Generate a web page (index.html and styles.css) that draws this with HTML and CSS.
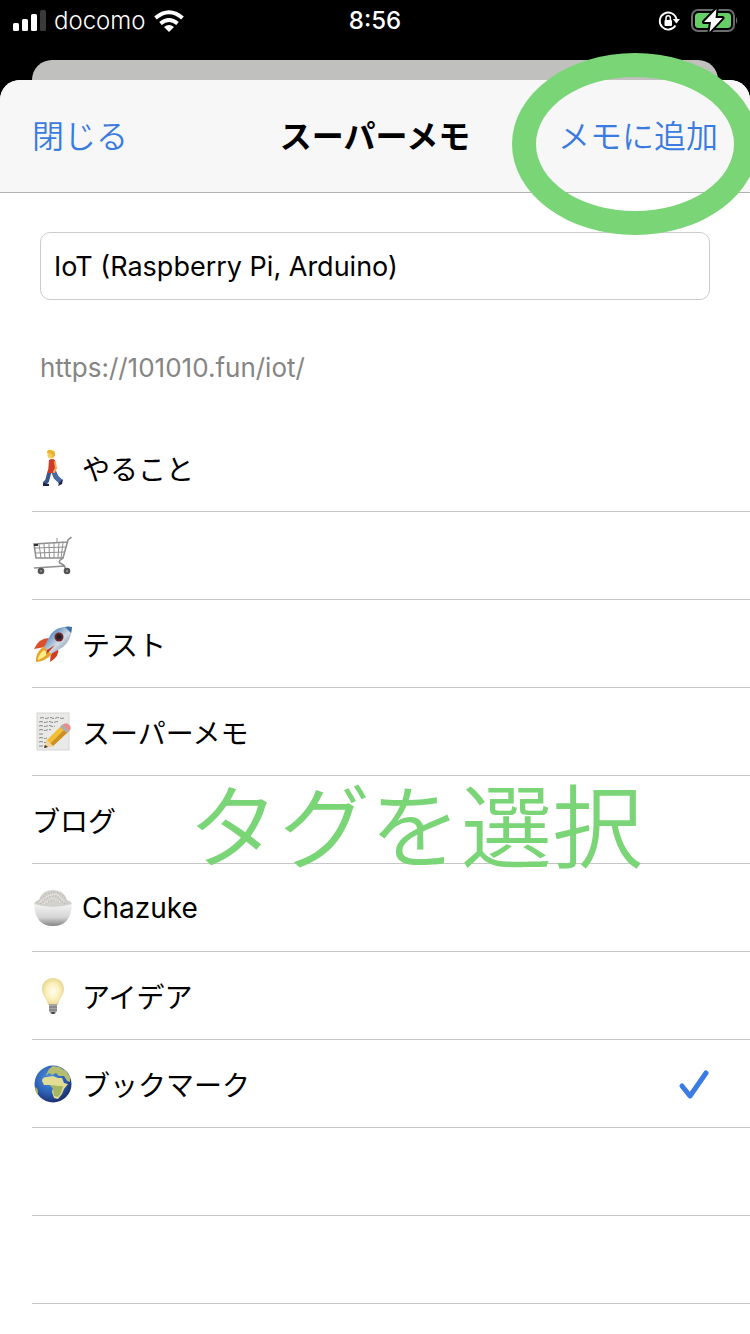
FILE: index.html
```html
<!DOCTYPE html>
<html lang="ja">
<head>
    <meta charset="UTF-8">
    <meta name="viewport" content="width=device-width, initial-scale=1.0">
    <title>スーパーメモ</title>
    <link rel="stylesheet" href="styles.css">
</head>
<body>
    <div class="status-bar">
        <div class="status-left">
            <svg class="signal" width="34" height="22" viewBox="0 0 34 22">
                <rect x="1" y="13" width="6" height="8" rx="1.5" fill="#fff"/>
                <rect x="10" y="9" width="6" height="12" rx="1.5" fill="#fff"/>
                <rect x="19" y="4" width="6" height="17" rx="1.5" fill="#fff"/>
                <rect x="28" y="0" width="6" height="21" rx="1.5" fill="#3a3a3a"/>
            </svg>
            <span>docomo</span>
            <svg class="wifi" width="30" height="22" viewBox="0 0 30 22">
                <g fill="none" stroke="#fff" stroke-width="4">
                    <path d="M1.500 8 Q15 -3.500 28.500 8"/>
                    <path d="M6.500 13.500 Q15 6.500 23.500 13.500"/>
                </g>
                <path d="M10 17 Q15 13 20 17 L15 22 Z" fill="#fff"/>
            </svg>
        </div>
        <div class="clock">8:56</div>
        <div class="status-right">
            <svg width="22" height="22" viewBox="0 0 22 22">
                <path d="M17.500 15.500 A8.500 8.500 0 1 1 18.500 9" fill="none" stroke="#fff" stroke-width="1.800"/>
                <path d="M14.800 9 H22 L18.400 13.500 Z" fill="#fff"/>
                <rect x="6.500" y="10" width="7.500" height="6" rx="1" fill="#fff"/>
                <path d="M8 10 V8 a2.200 2.200 0 0 1 4.400 0 V10" fill="none" stroke="#fff" stroke-width="1.500"/>
            </svg>
            <svg width="48" height="26" viewBox="0 0 48 26">
                <rect x="2" y="2" width="42" height="21" rx="6" fill="none" stroke="#6b6b6b" stroke-width="2"/>
                <rect x="5" y="5" width="36" height="15" rx="3.500" fill="#66ce67"/>
                <path d="M46 9 q2.500 3.500 0 7 Z" fill="#6b6b6b"/>
                <path d="M26.500 1 L14 14 H21 L19.500 24 L32.500 10 H25.500 Z" fill="#fff" stroke="#000" stroke-width="4" stroke-linejoin="round" paint-order="stroke"/>
            </svg>
        </div>
    </div>

    <div class="back-card"></div>

    <main class="sheet">
        <header class="nav">
            <button type="button" class="nav-btn">閉じる</button>
            <h1>スーパーメモ</h1>
            <button type="button" class="nav-btn add">メモに追加</button>
        </header>
        <div class="ring"></div>

        <form class="memo-form">
            <input type="text" class="memo-title" aria-label="タイトル" value="IoT (Raspberry Pi, Arduino)">
            <p class="memo-url">https://101010.fun/iot/</p>
        </form>

        <ul class="tags">
            <li>
                <label>
                    <svg class="icon" viewBox="0 0 40 40">
                        <path d="M18 22 L15 33 L12 36" fill="none" stroke="#3b568c" stroke-width="4"/>
                        <path d="M21 22 L24 29 L29 34" fill="none" stroke="#4a68a3" stroke-width="5"/>
                        <path d="M11 35 L17 36 V38 H11 Z M27 35 L31 31 L30 36 L26 38 Z" fill="#1c2547"/>
                        <path d="M17 12 Q20 10 23 12 L24 18 L22 25 H16 Z" fill="#cf3a2b"/>
                        <path d="M23 14 L24 20 L22 24" fill="none" stroke="#f2b04a" stroke-width="2" stroke-linecap="round"/>
                        <circle cx="19" cy="7" r="3.600" fill="#f7c95f"/>
                        <path d="M15 5 Q15 1 19 2 Q24 2 23 8 L20 9 Q21 5 15 5Z" fill="#e9b52f"/>
                    </svg>
                    <span>やること</span>
                    <input type="checkbox" name="tag">
                </label>
            </li>
            <li>
                <label>
                    <svg class="icon" viewBox="0 0 40 40">
                        <g fill="none" stroke="#909090">
                            <path d="M39.500 1 L36 4 L31 22 H4 L2 8 L35 6" stroke-width="1.600"/>
                            <path d="M3 12 L34 11 M3.500 17 L33 16 M7 8 L9 22 M12 8 L13 22 M17 8 L17.500 22 M22 7 V22 M27 7 L26 22 M31 7 L29 22 M25 2 V7" stroke-width="1"/>
                            <path d="M31 22 Q24 26 30 28 Q34 30 33 34 M2 32 L33 30 M9 32 V34" stroke-width="1.500"/>
                        </g>
                        <rect x="2" y="8" width="4" height="2" fill="#333"/>
                        <circle cx="9" cy="35" r="3.300" fill="#555"/>
                        <circle cx="35" cy="35" r="3.300" fill="#555"/>
                        <circle cx="9" cy="35" r="1" fill="#999"/>
                        <circle cx="35" cy="35" r="1" fill="#999"/>
                    </svg>
                    <input type="checkbox" name="tag" aria-label="買い物">
                </label>
            </li>
            <li>
                <label>
                    <svg class="icon" viewBox="0 0 40 40">
                        <defs>
                            <linearGradient id="hull" x1="0" y1="0" x2="1" y2="1">
                                <stop offset="0.200" stop-color="#4c83bd"/>
                                <stop offset="0.550" stop-color="#d3dce4"/>
                                <stop offset="0.850" stop-color="#7690aa"/>
                            </linearGradient>
                        </defs>
                        <path d="M17 14 Q7 14 2 25 L13 23 Z" fill="#dc4f2a"/>
                        <path d="M26 24 Q28 32 18 38 L19 28 Z" fill="#d23c22"/>
                        <path d="M12 22 Q3 29 4 38 Q14 37 20 30 Z" fill="#e9a32b"/>
                        <path d="M12 26 Q6 31 6 36 Q12 34 16 29 Z" fill="#fff08a"/>
                        <path d="M40 3 Q26 1 19 10 L12 23 L19 30 L31 23 Q40 15 40 3 Z" fill="url(#hull)"/>
                        <path d="M40 3 Q36 2 33 3 L39 9 Q40 6 40 3Z" fill="#3f72ad"/>
                        <circle cx="27" cy="13" r="4.500" fill="#742627"/>
                        <circle cx="27" cy="13" r="2.700" fill="#23202a"/>
                        <path d="M23 21 L14 31 L15 26 Z" fill="#c63a27"/>
                    </svg>
                    <span>テスト</span>
                    <input type="checkbox" name="tag">
                </label>
            </li>
            <li>
                <label>
                    <svg class="icon" viewBox="0 0 40 40">
                        <rect x="5" y="1" width="32" height="37" fill="#e9e9e7" stroke="#d5d5d2"/>
                        <path d="M8 6 q2 -1 4 0 t4 0 t4 0 t4 0 t4 0 t4 0 M7 10 q2 -1 4 0 t4 0 t4 0 t4 0 t4 0 M7 14 q2 -1 4 0 t4 0 t4 0 t4 0 M7 18 q2 -1 4 0 t4 0 t4 0 M7 22 h5 M7 26 q2 -1 4 0 t4 0 M7 30 q2 -1 4 0 t4 0 M7 34 h6" fill="none" stroke="#888" stroke-width="1" stroke-dasharray="4 1"/>
                        <path d="M12 36 L15 28 L30 13 L37 19 L21 34 Z" fill="#f0bf35"/>
                        <path d="M18 32 L34 16 L37 19 L21 34 Z" fill="#cf8e22"/>
                        <path d="M12 36 L15 28 L21 34 Z" fill="#f0d5a0"/>
                        <path d="M12 36 L13 33 L16 35 Z" fill="#333"/>
                        <path d="M28 15 L31 12 L38 18 L35 21 Z" fill="#a9adb2"/>
                        <path d="M31 13 Q33 10 36 12 Q41 15 37 19 Z" fill="#e58f8c"/>
                    </svg>
                    <span>スーパーメモ</span>
                    <input type="checkbox" name="tag">
                </label>
            </li>
            <li class="annotated">
                <label>
                    <span>ブログ</span>
                    <input type="checkbox" name="tag">
                </label>
                <div class="note">タグを選択</div>
            </li>
            <li>
                <label>
                    <svg class="icon" viewBox="0 0 40 40">
                        <defs>
                            <linearGradient id="bowl" x1="0" y1="0" x2="0" y2="1">
                                <stop offset="0" stop-color="#f4f4f4"/>
                                <stop offset="0.600" stop-color="#d5d5d5"/>
                                <stop offset="1" stop-color="#858585"/>
                            </linearGradient>
                        </defs>
                        <path d="M2 16 H40 Q39 38 21 38 Q3 38 2 16 Z" fill="url(#bowl)"/>
                        <path d="M2 16 Q4 12 7 12 Q10 2 21 2 Q32 2 35 12 Q39 13 40 16 Q21 22 2 16Z" fill="#d3d1cb"/>
                        <path d="M5 15 L9 11 L14 6 L20 4 L26 5 L31 8 L36 15 M8 16 L13 11 L19 8 L25 8 L33 16 M14 16 L18 12 L24 12 L29 16" fill="none" stroke="#bbb8b1" stroke-width="1.500" stroke-dasharray="1 2"/>
                        <path d="M8 14 L16 8 L24 6 L32 13 M12 16 L20 10 L28 14" fill="none" stroke="#eceae5" stroke-width="1.500" stroke-dasharray="1 1"/>
                    </svg>
                    <span>Chazuke</span>
                    <input type="checkbox" name="tag">
                </label>
            </li>
            <li>
                <label>
                    <svg class="icon" viewBox="0 0 40 40">
                        <defs>
                            <radialGradient id="glow">
                                <stop offset="0" stop-color="#fffef0"/>
                                <stop offset="0.600" stop-color="#fbf0bd"/>
                                <stop offset="1" stop-color="#ead793"/>
                            </radialGradient>
                        </defs>
                        <path d="M21 2 C14 2 10 7 10 13 C10 20 15 22 16 29 H26 C27 22 32 20 32 13 C32 7 28 2 21 2 Z" fill="url(#glow)"/>
                        <path d="M17 28 H25 V35 L23 38 H19 L17 35 Z" fill="#a5a5a5"/>
                        <path d="M17 31 H25 M17 34 H25" stroke="#707070" stroke-width="1"/>
                        <path d="M19 36 H23 L22 38 H20 Z" fill="#444"/>
                    </svg>
                    <span>アイデア</span>
                    <input type="checkbox" name="tag">
                </label>
            </li>
            <li>
                <label>
                    <svg class="icon" viewBox="0 0 40 40">
                        <defs>
                            <radialGradient id="sea" cx="0.400" cy="0.350" r="0.650">
                                <stop offset="0" stop-color="#4d93dc"/>
                                <stop offset="0.600" stop-color="#2d60b5"/>
                                <stop offset="1" stop-color="#1b3274"/>
                            </radialGradient>
                        </defs>
                        <circle cx="21" cy="20" r="18.500" fill="url(#sea)"/>
                        <path d="M10 17 Q10 13 15 13 L21 12 L26 14 L30 14 L32 19 L36 20 L32 25 L30 30 L26 35 L22 34 L20 28 L21 24 L18 21 L12 21 Z" fill="#e2dc95"/>
                        <path d="M19 21 L27 22 L31 22 L29 29 L26 33 L22 32 L21 25 Z" fill="#a5b560"/>
                        <path d="M15 9 L17 5 L21 2 L27 3 L34 7 L38 13 L38 18 L35 17 L32 12 L27 12 L24 9 L20 11 L17 9 L14 12 Z" fill="#b4bd70"/>
                        <path d="M3 23 Q6 24 6 28 L6 31 Q3 28 3 23 Z" fill="#a9b45e"/>
                    </svg>
                    <span>ブックマーク</span>
                    <input type="checkbox" name="tag" checked>
                    <svg class="check" width="32" height="32" viewBox="0 0 32 32">
                        <path d="M4 18 L12 28 L28 5" fill="none" stroke="#3a7be6" stroke-width="5" stroke-linecap="round" stroke-linejoin="round"/>
                    </svg>
                </label>
            </li>
            <li></li>
            <li></li>
        </ul>
    </main>
</body>
</html>
```
FILE: styles.css
```css
* {
    box-sizing: border-box;
}
body {
    margin: 0;
    background-color: #000;
    color: #000;
    font-family: Inter, "Noto Sans CJK JP", sans-serif;
    font-size: 28px;
    min-height: 100vh;
    display: flex;
    flex-direction: column;
    overflow-x: clip;
}
.status-bar {
    display: grid;
    grid-template-columns: 1fr auto 1fr;
    align-items: center;
    height: 41px;
    margin-bottom: 19px;
    padding: 0 12px;
    color: #fff;
    font-size: 24px;
    line-height: 42px;
}
.status-left,
.status-right {
    display: flex;
    align-items: center;
    gap: 8px;
}
.status-left {
    font-weight: 350;
}
.status-right {
    justify-content: flex-end;
    gap: 10px;
}
.clock {
    font-weight: 500;
}
.back-card {
    height: 20px;
    margin: 0 32px;
    border-radius: 20px 20px 0 0;
    background-color: #c0c1be;
}
.sheet {
    position: relative;
    flex: 1;
    background-color: #fff;
    border-radius: 20px 20px 0 0;
}
.nav {
    display: grid;
    grid-template-columns: 1fr auto 1fr;
    align-items: center;
    height: 113px;
    padding: 0 32px 4px;
    background-color: #f7f7f7;
    border-bottom: 1px solid #b2b2b2;
    border-radius: 20px 20px 0 0;
}
.nav h1 {
    margin: 0;
    font-size: 32px;
    font-weight: 700;
}
.nav-btn {
    justify-self: start;
    padding: 0;
    border: none;
    background: none;
    color: #3a7be0;
    font-family: inherit;
    font-size: 32px;
    font-weight: 350;
    cursor: pointer;
}
.nav-btn.add {
    justify-self: end;
}
/* 追加ボタンを囲む印 */
.ring {
    position: absolute;
    top: -27px;
    right: -8px;
    width: 246px;
    height: 182px;
    border: 24px solid #7ad576;
    border-radius: 50%;
    pointer-events: none;
}
.memo-form {
    padding: 39px 40px 32px;
}
.memo-title {
    display: block;
    width: 100%;
    height: 68px;
    padding: 0 13px;
    border: 1px solid #ccc;
    border-radius: 10px;
    background-color: #fff;
    color: #000;
    font-family: inherit;
    font-size: 27px;
}
.memo-url {
    margin: 46px 0 0;
    padding-bottom: 2px;
    color: #858585;
    font-size: 26px;
    line-height: 44px;
}
.tags {
    list-style: none;
    margin: 0;
    padding: 0 0 0 32px;
}
.tags li {
    height: 88px;
    border-bottom: 1px solid #c6c6c8;
}
.tags label {
    display: flex;
    align-items: center;
    height: 100%;
    padding-right: 40px;
}
.icon {
    width: 40px;
    height: 40px;
    margin-right: 10px;
}
.tags input {
    appearance: none;
    width: 0;
    height: 0;
    margin: 0;
}
.check {
    margin-left: auto;
}
.annotated {
    position: relative;
}
.note {
    position: absolute;
    top: -12px;
    left: 156px;
    color: #7ad576;
    font-size: 91px;
    font-weight: 350;
    line-height: 128px;
    white-space: nowrap;
    pointer-events: none;
}
```
